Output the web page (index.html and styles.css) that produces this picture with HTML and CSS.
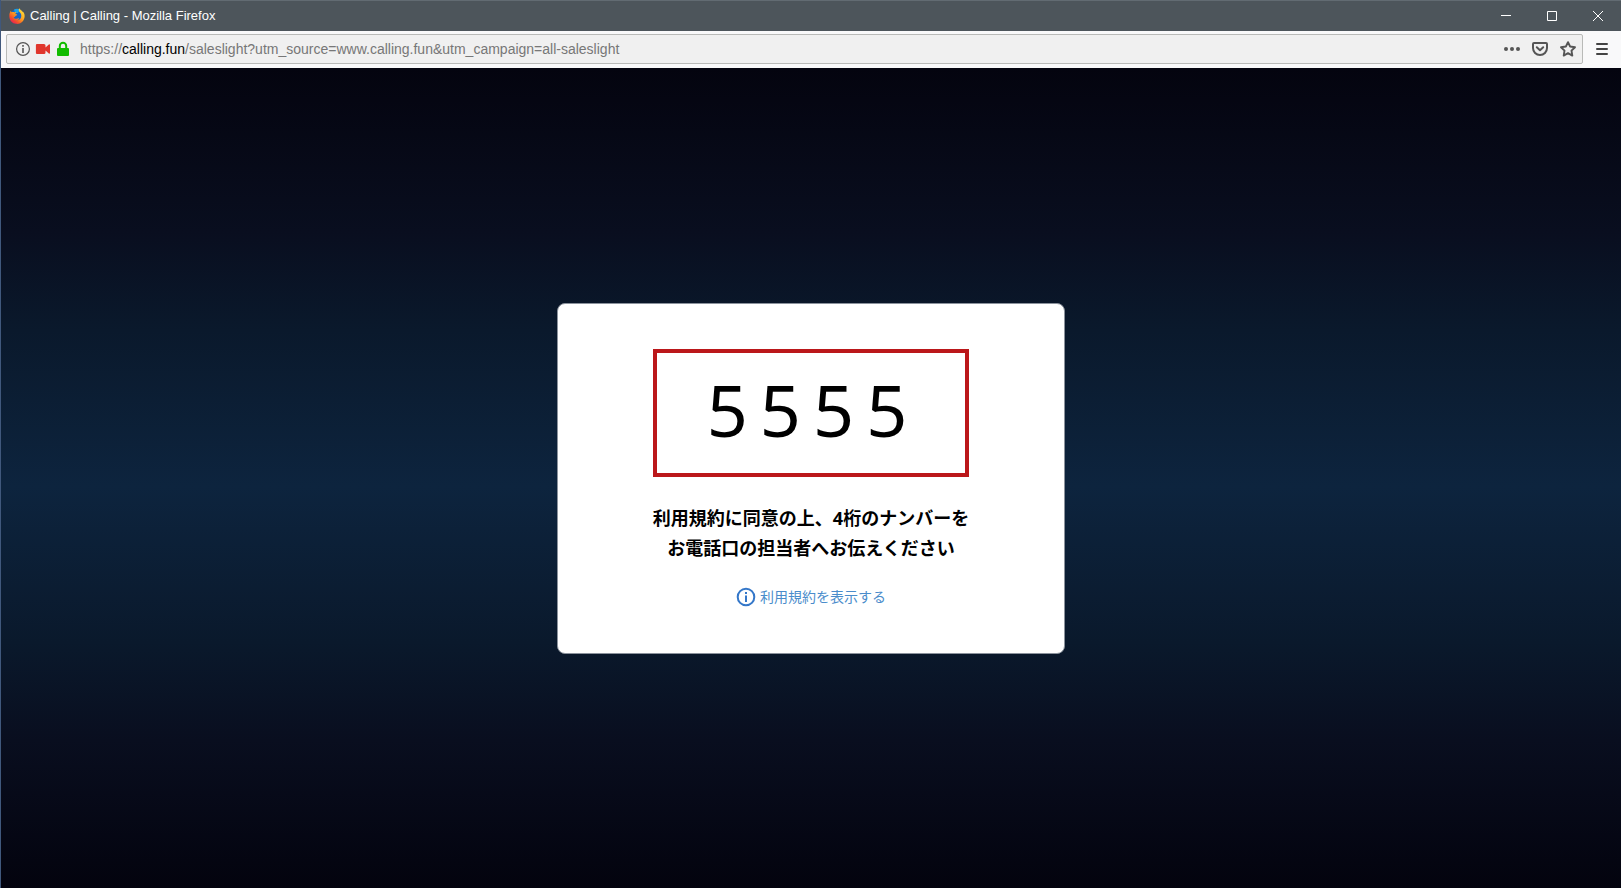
FILE: index.html
```html
<!DOCTYPE html>
<html lang="ja">
<head>
<meta charset="utf-8">
<title>Calling | Calling</title>
<link rel="stylesheet" href="styles.css">
</head>
<body>
<div class="window">
  <header class="titlebar">
    <svg class="logo" viewBox="0 0 16 16" aria-hidden="true">
      <defs>
        <linearGradient id="flame" x1="0.9" y1="0.1" x2="0.2" y2="1">
          <stop offset="0" stop-color="#ffe43a"/>
          <stop offset="0.45" stop-color="#ffa01e"/>
          <stop offset="0.75" stop-color="#f4502c"/>
          <stop offset="1" stop-color="#e8175d"/>
        </linearGradient>
      </defs>
      <circle cx="7.6" cy="7.4" r="6.2" fill="#1565c8"/>
      <path d="M5 1.6C6.500 .6 9.500 .5 11 1.600L9 5 6 5Z" fill="#1da0e8"/>
      <path d="M10.200 .2C11 1.500 12.600 2.200 13.600 3.800 14.300 4.200 14.700 4.500 14.800 4.800 16.200 7.200 15.800 10.500 14 13 12.200 15.300 9.500 16.200 7 15.800 3.500 15.400 .8 12.600 .4 9.200 .1 6.600 .6 4.600 2 2.600 2 3.300 2.200 3.800 2.600 4.200 3.600 3.900 4.800 4 5.500 4.500 6.200 4.200 6.800 4 7.300 4.200 6.700 4.700 6.300 5.300 6.400 6 7 6.400 7.900 6.300 8.200 6.700 8.100 7.400 6.500 7.600 6.200 8.200 6.200 9.200 5.200 9.100 4.700 8.900 5 10.300 6.300 11 7.600 10.800 8.800 10.600 9.400 10.100 10.100 10.400 9.700 11.400 8.800 12 7.800 12.200 10.500 12.400 12.300 10.500 12.300 8 12.300 6.200 11.700 5 10.700 4.200 9.600 3 9.500 1.500 10.200 .2Z" fill="url(#flame)"/>
    </svg>
    <span class="title">Calling | Calling - Mozilla Firefox</span>
    <div class="controls">
      <button class="control" type="button" aria-label="最小化"><svg class="glyph" viewBox="0 0 12 12"><path d="M1 5.500H11"/></svg></button>
      <button class="control" type="button" aria-label="最大化"><svg class="glyph" viewBox="0 0 12 12"><path d="M1.500 1.500H10.500V10.500H1.500Z"/></svg></button>
      <button class="control" type="button" aria-label="閉じる"><svg class="glyph" viewBox="0 0 12 12"><path d="M1 1 11 11M11 1 1 11"/></svg></button>
    </div>
  </header>

  <nav class="toolbar" aria-label="ナビゲーション">
    <div class="urlbar">
      <button class="identity" type="button" aria-label="サイト情報">
        <svg class="icon" viewBox="0 0 16 16" fill="none" stroke="#555"><circle cx="8" cy="8" r="6.400" stroke-width="1.200"/><path d="M8 7V12" stroke-width="1.600"/><path d="M8 4V5.700" stroke-width="1.600"/></svg>
        <svg class="icon" viewBox="0 0 16 16" fill="#e0362c"><path d="M2 3H9Q10.500 3 10.500 4.500V6.500L13.800 3.400Q15 3 15 4V12Q15 13 13.800 12.600L10.500 9.500V11.500Q10.500 13 9 13H2Q.9 13 .9 11.900V4.100Q.9 3 2 3Z"/></svg>
        <svg class="icon" viewBox="0 0 16 16"><path d="M4.800 8V5A3.200 3.200 0 0 1 11.200 5V8" fill="none" stroke="#12bc00" stroke-width="2"/><rect x="2" y="7" width="12" height="8" rx="1" fill="#12bc00"/></svg>
      </button>
      <div class="url" role="textbox" contenteditable="true" spellcheck="false" aria-label="アドレス">https://<span class="domain">calling.fun</span>/saleslight?utm_source=www.calling.fun&amp;utm_campaign=all-saleslight</div>
      <div class="actions">
        <button class="action" type="button" aria-label="ページ操作"><svg class="icon" viewBox="0 0 16 16" fill="#555"><circle cx="2" cy="8" r="2"/><circle cx="8" cy="8" r="2"/><circle cx="14" cy="8" r="2"/></svg></button>
        <button class="action" type="button" aria-label="Pocket に保存"><svg class="icon" viewBox="0 0 16 16" fill="none" stroke="#555" stroke-width="2" stroke-linecap="round" stroke-linejoin="round"><path d="M2 2H14Q15 2 15 3V7A7 7 0 0 1 1 7V3Q1 2 2 2Z"/><path d="M4.800 6.300 8 9.300 11.200 6.300"/></svg></button>
        <button class="action" type="button" aria-label="ブックマーク"><svg class="icon" viewBox="0 0 16 16" fill="none" stroke="#555" stroke-width="1.900" stroke-linejoin="round"><path d="M8 1.200 10.100 5.500 15 6.200 11.500 9.600 12.300 14.600 8 12.200 3.700 14.600 4.500 9.600 1 6.200 5.900 5.500Z"/></svg></button>
      </div>
    </div>
    <button class="menu" type="button" aria-label="メニュー"><svg class="icon" viewBox="0 0 16 16" stroke="#444" stroke-width="2" stroke-linecap="round"><path d="M3 3H13M3 8H13M3 13H13"/></svg></button>
  </nav>

  <main class="page">
    <section class="card">
      <div class="number" aria-label="5555"><span>5</span><span>5</span><span>5</span><span>5</span></div>
      <p class="message">利用規約に同意の上、4桁のナンバーを<br>お電話口の担当者へお伝えください</p>
      <a class="terms" href="#terms"><svg class="info" viewBox="0 0 20 20" fill="none" stroke="#3477c9" stroke-width="2"><circle cx="10" cy="10" r="8.300"/><path d="M10 8.500V15M10 5V7"/></svg>利用規約を表示する</a>
    </section>
  </main>
</div>
</body>
</html>
```
FILE: styles.css
```css
* {
  box-sizing: border-box;
}

body {
  margin: 0;
  font-family: "Noto Sans", "Noto Sans CJK JP", sans-serif;
}

button {
  display: flex;
  align-items: center;
  justify-content: center;
  margin: 0;
  padding: 0;
  border: 0;
  background: none;
}

.window {
  display: flex;
  flex-direction: column;
  min-height: 100vh;
  border-left: 1px solid #40587c;
}

.titlebar {
  display: flex;
  align-items: center;
  gap: 5px;
  height: 31px;
  padding-left: 8px;
  border-top: 1px solid #626b72;
  background: #4d555b;
  color: #fff;
}

.logo {
  width: 16px;
  height: 16px;
}

.title {
  flex: 1;
  font: 13px/16px "Liberation Sans", Arial, sans-serif;
}

.controls {
  display: flex;
}

.control {
  width: 46px;
  height: 30px;
}

.glyph {
  width: 12px;
  height: 12px;
  fill: none;
  stroke: #fff;
}

.toolbar {
  display: flex;
  align-items: center;
  height: 37px;
  padding: 0 0 2px 5px;
  background: #f9f9fa;
}

.urlbar {
  display: flex;
  flex: 1;
  align-items: center;
  height: 30px;
  padding: 0 6px 0 8px;
  border: 1px solid #b9bab8;
  border-radius: 2px;
  background: #f0f0f0;
}

.icon {
  width: 16px;
  height: 16px;
}

.identity {
  gap: 4px;
}

.url {
  flex: 1;
  margin-left: 9px;
  color: #777;
  font: 14px/20px "Liberation Sans", Arial, sans-serif;
  white-space: nowrap;
}

.domain {
  color: #000;
}

.actions {
  display: flex;
  gap: 12px;
}

.menu {
  width: 38px;
  height: 30px;
}

.page {
  display: flex;
  flex: 1;
  align-items: center;
  justify-content: center;
  background: linear-gradient(#04040f, #090e1f 20%, #0a192c 32%, #0d243e 51%, #0a192c 70%, #090e1f 82%, #03030e);
}

.card {
  display: flex;
  flex-direction: column;
  align-items: center;
  width: 508px;
  padding: 45px 24px 46px;
  border: 1px solid #8b929c;
  border-radius: 8px;
  background: #fff;
}

.number {
  display: flex;
  justify-content: center;
  gap: 12px;
  width: 316px;
  padding: 10px 14px 18px 6px;
  border: 4px solid #bb171a;
  color: #000;
  font-size: 72px;
  line-height: 92px;
}

.message {
  margin: 26px 0 0;
  color: #000;
  font-size: 18px;
  font-weight: 700;
  line-height: 30px;
  text-align: center;
}

.terms {
  display: flex;
  align-items: center;
  gap: 4px;
  margin-top: 24px;
  color: #4a8ccb;
  font-size: 14px;
  line-height: 20px;
  text-decoration: none;
}

.info {
  width: 20px;
  height: 20px;
}
```
